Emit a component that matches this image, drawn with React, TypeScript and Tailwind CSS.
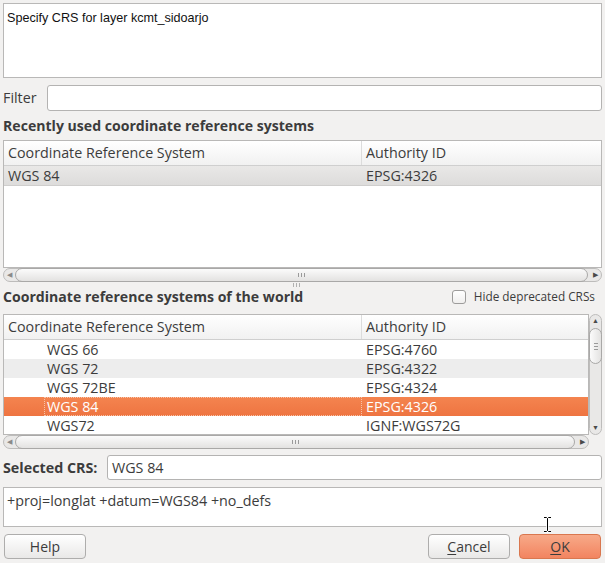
import React from "react";

const Grip = ({ color = "bg-[#9a9a9a]" }: { color?: string }) => (
  <div className="flex gap-[2px]">
    <div className={`w-[1px] h-[4px] ${color}`} />
    <div className={`w-[1px] h-[4px] ${color}`} />
    <div className={`w-[1px] h-[4px] ${color}`} />
  </div>
);

const HScroll = ({ width }: { width: string }) => (
  <div className={`relative ${width} h-[14px] flex items-center`}>
    <div className="absolute inset-0 rounded-full border border-[#bdbcbb] bg-[#e9e8e7]" />
    <div className="relative w-[12px] h-full flex items-center justify-center text-[7px] text-[#8a8a8a]">◀</div>
    <div className="relative flex-1 h-[14px] rounded-full border border-[#a9a8a7] bg-gradient-to-b from-[#fbfbfb] to-[#e3e2e1] flex items-center justify-center">
      <Grip />
    </div>
    <div className="relative w-[14px] h-full flex items-center justify-center text-[7px] text-[#4a4a4a]">▶</div>
  </div>
);

const Header = ({ w }: { w: string }) => (
  <div className="flex h-[25px] border-b border-[#cfcfcf] bg-gradient-to-b from-[#ffffff] to-[#f1f1f1] text-[14.3px]">
    <div className={`${w} shrink-0 border-r border-[#dcdcdc] pl-[4px] flex items-center`}>Coordinate Reference System</div>
    <div className="flex-1 pl-[4px] flex items-center">Authority ID</div>
  </div>
);

export default function App() {
  const rows = [
    { n: "WGS 66", id: "EPSG:4760", bg: "bg-white" },
    { n: "WGS 72", id: "EPSG:4322", bg: "bg-[#ededed]" },
    { n: "WGS 72BE", id: "EPSG:4324", bg: "bg-white" },
    { n: "WGS 84", id: "EPSG:4326", bg: "sel" },
    { n: "WGS72", id: "IGNF:WGS72G", bg: "bg-white" },
  ];
  return (
    <div className="relative w-[605px] h-[563px] overflow-hidden bg-[#f2f1f0] text-[#3c3c3c] font-['Open_Sans',sans-serif] px-[3px] pt-[3px]">
      {/* top message */}
      <div className="h-[75px] border border-[#b9b8b7] bg-white px-[3px] pt-[5px] font-['Liberation_Sans',Arial,sans-serif] text-[12.6px] text-[#111]">
        Specify CRS for layer kcmt_sidoarjo
      </div>

      {/* filter */}
      <div className="mt-[7px] h-[26px] flex items-center">
        <div className="w-[44px] text-[14.3px]">Filter</div>
        <div className="flex-1 h-[26px] rounded-[3px] border border-[#b4b3b2] bg-white" />
      </div>

      <div className="h-[29px] flex items-center font-bold text-[14.1px]">Recently used coordinate reference systems</div>

      {/* table 1 */}
      <div className="h-[128px] border border-[#b9b8b7] bg-white overflow-hidden">
        <Header w="w-[358px]" />
        <div className="flex h-[20px] text-[14.3px] border-b border-[#cfcecd] bg-gradient-to-b from-[#e9e8e7] to-[#dddcdb]">
          <div className="w-[358px] shrink-0 pl-[4px] flex items-center">WGS 84</div>
          <div className="flex-1 pl-[4px] flex items-center">EPSG:4326</div>
        </div>
      </div>
      <HScroll width="w-full" />

      {/* world label row */}
      <div className="relative h-[32px] flex items-center justify-between pb-[2px]">
        <div className="absolute left-[290px] top-[1px]">
          <Grip color="bg-[#b0b0b0]" />
        </div>
        <div className="font-bold text-[14.1px]">Coordinate reference systems of the world</div>
        <div className="flex items-center mr-[7px]">
          <div className="w-[14px] h-[14px] rounded-[3px] border border-[#9d9c9b] bg-gradient-to-b from-white to-[#f0efee]" />
          <div className="ml-[8px] text-[11.8px]">Hide deprecated CRSs</div>
        </div>
      </div>

      {/* table 2 */}
      <div className="flex h-[121px]">
        <div className="w-[586px] h-full border border-[#b9b8b7] bg-white overflow-hidden">
          <Header w="w-[358px]" />
          {rows.map((r) =>
            r.bg === "sel" ? (
              <div key={r.n} className="flex h-[19px] text-[14.3px] text-white bg-gradient-to-b from-[#f4844f] to-[#ee7441]">
                <div className="w-[358px] shrink-0 pl-[40px] flex">
                  <div className="flex-1 border border-dotted border-[#f7c3a8] pl-[2px] flex items-center">{r.n}</div>
                </div>
                <div className="flex-1 pl-[4px] flex items-center">{r.id}</div>
              </div>
            ) : (
              <div key={r.n} className={`flex h-[19px] text-[14.3px] ${r.bg}`}>
                <div className="w-[358px] shrink-0 pl-[43px] flex items-center">{r.n}</div>
                <div className="flex-1 pl-[4px] flex items-center">{r.id}</div>
              </div>
            )
          )}
        </div>
        {/* vertical scrollbar */}
        <div className="relative w-[13px] h-full flex flex-col items-center">
          <div className="absolute inset-0 rounded-full border border-[#bdbcbb] bg-[#e9e8e7]" />
          <div className="relative h-[14px] w-full flex items-center justify-center text-[7px] text-[#4a4a4a]">▲</div>
          <div className="relative w-[13px] h-[36px] rounded-full border border-[#a9a8a7] bg-gradient-to-r from-[#fbfbfb] to-[#e3e2e1] flex items-center justify-center">
            <div className="flex flex-col gap-[2px]">
              <div className="w-[4px] h-[1px] bg-[#9a9a9a]" />
              <div className="w-[4px] h-[1px] bg-[#9a9a9a]" />
              <div className="w-[4px] h-[1px] bg-[#9a9a9a]" />
            </div>
          </div>
          <div className="flex-1" />
          <div className="relative h-[14px] w-full flex items-center justify-center text-[7px] text-[#4a4a4a]">▼</div>
        </div>
      </div>
      <HScroll width="w-[586px]" />

      {/* selected crs */}
      <div className="mt-[6px] h-[25px] flex items-center">
        <div className="w-[104px] font-bold text-[14.3px]">Selected CRS:</div>
        <div className="flex-1 h-[25px] rounded-[3px] border border-[#b4b3b2] bg-white flex items-center pl-[4px] text-[14.3px]">WGS 84</div>
      </div>

      <div className="mt-[7px] h-[40px] border border-[#b9b8b7] bg-white px-[3px] pt-[3px] text-[14.3px] leading-[20px]">
        +proj=longlat +datum=WGS84 +no_defs
      </div>

      {/* buttons */}
      <div className="mt-[7px] h-[25px] flex items-center">
        <div className="ml-[1px] w-[82px] h-[25px] rounded-[4px] border border-[#aeadac] bg-gradient-to-b from-[#ffffff] to-[#e9e8e7] flex items-center justify-center text-[14px]">Help</div>
        <div className="flex-1" />
        <div className="w-[82px] h-[25px] rounded-[4px] border border-[#aeadac] bg-gradient-to-b from-[#ffffff] to-[#e9e8e7] flex items-center justify-center text-[14px]">
          <span><span className="underline underline-offset-2">C</span>ancel</span>
        </div>
        <div className="ml-[9px] w-[82px] h-[25px] rounded-[4px] border border-[#d9774f] bg-gradient-to-b from-[#f7a988] to-[#f28460] flex items-center justify-center text-[14px]">
          <span><span className="underline underline-offset-2">O</span>K</span>
        </div>
        <div className="w-[1px]" />
      </div>

      {/* mouse I-beam cursor */}
      <svg className="absolute left-[543px] top-[516px]" width="9" height="17" viewBox="0 0 9 17">
        <path d="M1 1.5h2.5l1 1 1-1H8M4.5 2.5v12M1 15.5h2.5l1-1 1 1H8" fill="none" stroke="#fff" strokeWidth="2.5" />
        <path d="M1 1.5h2.5l1 1 1-1H8M4.5 2.5v12M1 15.5h2.5l1-1 1 1H8" fill="none" stroke="#000" strokeWidth="1" />
      </svg>
    </div>
  );
}
